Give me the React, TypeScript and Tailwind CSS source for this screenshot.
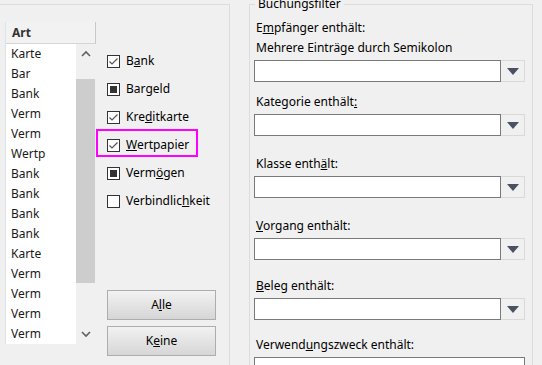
import React from 'react';

const font = { fontFamily: '"Noto Sans", "Open Sans", sans-serif' };

const artItems = ['Karte', 'Bar', 'Bank', 'Verm', 'Verm', 'Wertp', 'Bank', 'Bank', 'Bank', 'Bank', 'Karte', 'Verm', 'Verm', 'Verm', 'Verm'];

type CheckState = 'checked' | 'mixed' | 'empty';

const checks: { pre: string; key: string; post: string; state: CheckState }[] = [
  { pre: 'B', key: 'a', post: 'nk', state: 'checked' },
  { pre: 'Bar', key: 'g', post: 'eld', state: 'mixed' },
  { pre: 'Kre', key: 'd', post: 'itkarte', state: 'checked' },
  { pre: '', key: 'W', post: 'ertpapier', state: 'checked' },
  { pre: 'Verm', key: 'ö', post: 'gen', state: 'mixed' },
  { pre: 'Verbindlic', key: 'h', post: 'keit', state: 'empty' },
];

const Chevron: React.FC<{ up?: boolean }> = ({ up }) => (
  <svg width="10" height="7" viewBox="0 0 10 7">
    <path
      d={up ? 'M1 6 L5 2 L9 6' : 'M1 1 L5 5 L9 1'}
      fill="none"
      stroke="#606060"
      strokeWidth="1.6"
    />
  </svg>
);

const CheckBox: React.FC<{ state: CheckState }> = ({ state }) => (
  <div className="w-[13px] h-[13px] border border-[#333333] bg-white flex items-center justify-center shrink-0">
    {state === 'checked' && (
      <svg width="11" height="11" viewBox="0 0 11 11">
        <path d="M1.5 5.5 L4 8 L9.5 2.5" fill="none" stroke="#555555" strokeWidth="1.2" />
      </svg>
    )}
    {state === 'mixed' && <div className="w-[7px] h-[7px] bg-[#333333]" />}
  </div>
);

const Combo: React.FC<{ mt: string }> = ({ mt }) => (
  <div className={`flex ${mt}`}>
    <div className="w-[247px] h-[22px] border border-[#7a7a7a] bg-white" />
    <div className="w-[24px] h-[22px] border border-l-0 border-[#d9d9d9] bg-[#f0f0f0] flex items-center justify-center">
      <svg width="12" height="7" viewBox="0 0 12 7">
        <path d="M0 0 H12 L6 7 Z" fill="#4a5262" />
      </svg>
    </div>
  </div>
);

const Label: React.FC<{ children: React.ReactNode; mt: string }> = ({ children, mt }) => (
  <div className={`h-[16px] leading-[16px] pl-[2px] ${mt}`}>{children}</div>
);

export default function App() {
  return (
    <div className="w-[542px] h-[365px] bg-[#f0f0f0] flex overflow-hidden text-[12px] text-black" style={font}>
      {/* linke Gruppe */}
      <div className="w-[230px] h-[400px] mt-[4px] border-t border-r border-[#dcdcdc] flex shrink-0">
        <div className="ml-[5px] mt-[17px] w-[91px] h-[322px] border-l border-[#dde3ea] flex flex-col">
          <div className="h-[22px] border-b border-[#d5d5d5] border-r border-r-[#c8c8c8] bg-[#f2f2f2] flex items-center pl-[6px] font-bold text-[#333]">
            Art
          </div>
          <div className="flex flex-1">
            <div className="w-[70px] bg-white">
              {artItems.map((a, i) => (
                <div key={i} className="h-[20px] leading-[20px] pl-[5px] text-[#1a1a1a]">
                  {a}
                </div>
              ))}
            </div>
            <div className="w-[20px] bg-[#f0f0f0] flex flex-col">
              <div className="h-[18px] flex items-center justify-center">
                <Chevron up />
              </div>
              <div className="h-[17px]" />
              <div className="h-[204px] w-[19px] bg-[#cdcdcd]" />
              <div className="flex-1" />
              <div className="h-[20px] flex items-center justify-center">
                <Chevron />
              </div>
            </div>
          </div>
        </div>

        <div className="ml-[11px] mt-[42px] flex flex-col">
          {checks.map((c, i) => (
            <div key={i} className="relative h-[28px] flex items-center">
              <CheckBox state={c.state} />
              <span className="ml-[6px]">
                {c.pre}
                <u>{c.key}</u>
                {c.post}
              </span>
              {i === 3 && (
                <div className="absolute left-[-11px] top-[-2px] w-[102px] h-[28px] border-2 border-[#ff00ff]" />
              )}
            </div>
          ))}
          <button className="mt-[75px] w-[109px] h-[30px] border border-[#adadad] bg-gradient-to-b from-[#f2f2f2] to-[#d6d6d6] text-[12px]">
            A<u>l</u>le
          </button>
          <button className="mt-[6px] w-[109px] h-[30px] border border-[#adadad] bg-gradient-to-b from-[#f2f2f2] to-[#d6d6d6] text-[12px]">
            K<u>e</u>ine
          </button>
        </div>
      </div>

      {/* Buchungsfilter */}
      <div className="relative ml-[19px] mt-[4px] w-[284px] h-[400px] border border-[#dcdcdc] pl-[4px] shrink-0">
        <span className="absolute left-[5px] top-[-9px] px-[3px] bg-[#f0f0f0] leading-[16px]">Buchungsfilter</span>
        <Label mt="mt-[15px]">
          E<u>m</u>pfänger enthält:
        </Label>
        <Label mt="mt-[4px]">Mehrere Einträge durch Semikolon</Label>
        <Combo mt="mt-[4px]" />
        <Label mt="mt-[12px]">
          Kategorie enthält<u>:</u>
        </Label>
        <Combo mt="mt-[4px]" />
        <Label mt="mt-[20px]">
          Klasse enth<u>ä</u>lt:
        </Label>
        <Combo mt="mt-[4px]" />
        <Label mt="mt-[20px]">
          <u>V</u>organg enthält:
        </Label>
        <Combo mt="mt-[4px]" />
        <Label mt="mt-[18px]">
          <u>B</u>eleg enthält:
        </Label>
        <Combo mt="mt-[4px]" />
        <Label mt="mt-[17px]">
          Verwend<u>u</u>ngszweck enthält:
        </Label>
        <div className="mt-[4px] w-[271px] h-[22px] border border-[#7a7a7a] bg-white" />
      </div>
    </div>
  );
}
